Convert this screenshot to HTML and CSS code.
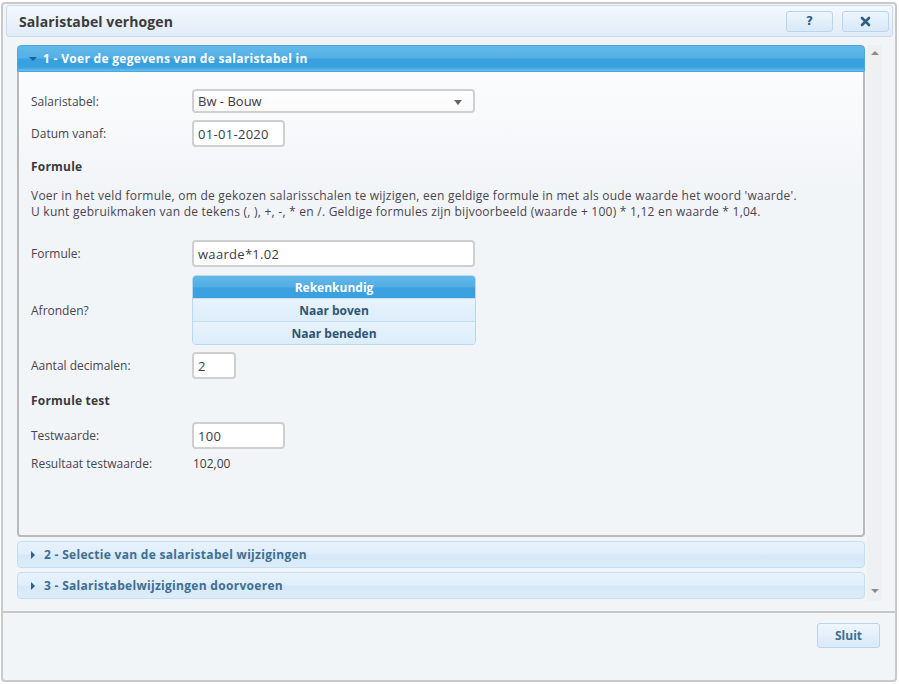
FILE: index.html
```html
<!DOCTYPE html>
<html>
<head>
<meta charset="utf-8">
<link rel="stylesheet" href="styles.css">
</head>
<body>
<div class="dialog">
  <div class="titlebar">
    <div class="title">Salaristabel verhogen</div>
    <div class="tbtns">
      <button class="tbtn">?</button>
      <button class="tbtn"><svg width="11" height="11" viewBox="0 0 11 11"><path d="M2 2 L9 9 M9 2 L2 9" stroke="#2f5f86" stroke-width="2.6" stroke-linecap="round"/></svg></button>
    </div>
  </div>
  <div class="content">
    <div class="panels">
      <div class="panel open">
        <div class="phead active"><span class="tri down"></span>1 - Voer de gegevens van de salaristabel in</div>
        <div class="pbody">
          <div class="row r-select">
            <div class="label">Salaristabel:</div>
            <div class="select">Bw - Bouw<span class="caret"></span></div>
          </div>
          <div class="row r-date">
            <div class="label">Datum vanaf:</div>
            <div class="input w92">01-01-2020</div>
          </div>
          <div class="heading h-formule">Formule</div>
          <p class="help">Voer in het veld formule, om de gekozen salarisschalen te wijzigen, een geldige formule in met als oude waarde het woord 'waarde'.<br>U kunt gebruikmaken van de tekens (, ), +, -, * en /. Geldige formules zijn bijvoorbeeld (waarde + 100) * 1,12 en waarde * 1,04.</p>
          <div class="row r-formule">
            <div class="label">Formule:</div>
            <div class="input w282">waarde*1.02</div>
          </div>
          <div class="row r-afronden">
            <div class="label">Afronden?</div>
            <div class="btngroup">
              <div class="opt sel">Rekenkundig</div>
              <div class="opt">Naar boven</div>
              <div class="opt">Naar beneden</div>
            </div>
          </div>
          <div class="row r-dec">
            <div class="label">Aantal decimalen:</div>
            <div class="input w43">2</div>
          </div>
          <div class="heading h-test">Formule test</div>
          <div class="row r-test">
            <div class="label">Testwaarde:</div>
            <div class="input w92">100</div>
          </div>
          <div class="row r-result">
            <div class="label">Resultaat testwaarde:</div>
            <div class="value">102,00</div>
          </div>
        </div>
      </div>
      <div class="phead closed"><span class="tri right"></span>2 - Selectie van de salaristabel wijzigingen</div>
      <div class="phead closed"><span class="tri right"></span>3 - Salaristabelwijzigingen doorvoeren</div>
    </div>
    <div class="scrollbar">
      <span class="arrow up"></span>
      <span class="arrow dn"></span>
    </div>
  </div>
  <div class="footer">
    <button class="sluit">Sluit</button>
  </div>
</div>
</body>
</html>
```
FILE: styles.css
```css
* { box-sizing: border-box; }
html, body { margin: 0; padding: 0; }
body {
  background: #ffffff;
  font-family: "Open Sans", "DejaVu Sans", sans-serif;
  font-size: 12px;
  color: #4a4450;
}
.dialog {
  margin: 2px 0 0 1px;
  width: 896px;
  height: 680px;
  border: 2px solid #c9c9c9;
  border-radius: 4px;
  background: #f2f5f8;
  display: flex;
  flex-direction: column;
}
.titlebar {
  margin: 1px 2px 0 3px;
  height: 32px;
  border: 1px solid #c5dcf1;
  border-radius: 3px;
  background: linear-gradient(#f3f8fd, #e1ecf7);
  display: flex;
  align-items: center;
  justify-content: space-between;
  padding: 0 3px 0 12px;
}
.title {
  font-weight: 700;
  font-size: 14px;
  color: #3b3b3b;
  letter-spacing: 0.1px;
}
.tbtns { display: flex; gap: 9px; }
.tbtn {
  width: 47px;
  height: 21px;
  border: 1px solid #b8d4ee;
  border-radius: 3px;
  background: linear-gradient(#edf5fc, #d9e9f7);
  color: #2f5f86;
  font-family: "DejaVu Sans", sans-serif;
  font-weight: 700;
  font-size: 12px;
  padding: 0;
  display: flex;
  align-items: center;
  justify-content: center;
}
.content {
  display: flex;
  padding: 8px 13px 0 14px;
  height: 574px;
}
.panels { flex: 1; display: flex; flex-direction: column; }
.panel { display: flex; flex-direction: column; }
.phead {
  height: 27px;
  border-radius: 4px 4px 0 0;
  display: flex;
  align-items: center;
  padding-left: 11px;
  font-weight: 700;
  font-size: 12px;
  letter-spacing: 0.3px;
}
.phead.active {
  background: linear-gradient(#62b8e8 0%, #55b0e5 48%, #39a0e0 52%, #3aa1df 85%, #6fbde9 100%);
  border: 1px solid #4aa8e1;
  color: #ffffff;
}
.phead.closed {
  margin-top: 4px;
  border-radius: 4px;
  background: linear-gradient(#e6f2fc 0%, #e1effb 48%, #d6e9f8 52%, #dcecf9 100%);
  border: 1px solid #c4dff4;
  color: #3e6e93;
  padding-left: 10px;
}
.tri { display: inline-block; width: 0; height: 0; margin-right: 6px; }
.tri.down {
  border-left: 4px solid transparent;
  border-right: 4px solid transparent;
  border-top: 4px solid #1d639a;
}
.tri.right {
  border-top: 4px solid transparent;
  border-bottom: 4px solid transparent;
  border-left: 4px solid #2f5f86;
  margin-left: 3px;
  margin-right: 9px;
}
.pbody {
  height: 465px;
  border: 2px solid #b9b9b9;
  border-top: 0;
  border-radius: 0 0 4px 4px;
  background: linear-gradient(#fbfcfd, #f2f5f8 25%, #f2f5f8);
  padding: 17px 0 0 12px;
}
.row { display: flex; align-items: center; }
.label { width: 161px; color: #4a4450; }
.select, .input {
  border: 2px solid #cfcfcf;
  border-radius: 4px;
  background: #ffffff;
  color: #3e3a44;
  font-size: 13px;
  display: flex;
  align-items: center;
  padding-left: 4px;
}
.input { letter-spacing: 0.3px; }
.select {
  width: 283px;
  height: 24px;
  position: relative;
  background: linear-gradient(#ffffff, #fafafa);
}
.caret {
  position: absolute;
  right: 11px;
  top: 9px;
  border-left: 4px solid transparent;
  border-right: 4px solid transparent;
  border-top: 5px solid #666;
}
.input { height: 27px; }
.w92 { width: 93px; }
.w282 { width: 283px; }
.w43 { width: 44px; }
.r-date { margin-top: 7px; }
.heading { font-weight: 700; color: #3d3840; font-size: 12px; letter-spacing: 0.2px; }
.h-formule { margin-top: 12px; line-height: 16px; }
.help { margin: 13px 0 0 0; line-height: 16px; color: #4a4450; letter-spacing: 0.24px; }
.r-formule { margin-top: 20px; }
.r-afronden { margin-top: 8px; }
.btngroup {
  width: 284px;
  border: 1px solid #b9d7f0;
  border-radius: 4px;
  overflow: hidden;
}
.opt {
  height: 23px;
  display: flex;
  align-items: center;
  justify-content: center;
  font-weight: 700;
  font-size: 12px;
  color: #2f5575;
  background: linear-gradient(#e8f3fc, #dcedfa);
  border-top: 1px solid #c5e0f5;
}
.opt.sel {
  border-top: 0;
  height: 22px;
  color: #ffffff;
  background: linear-gradient(#62b8e8 0%, #52ade4 50%, #3aa0df 55%, #3ba1df 100%);
}
.r-dec { margin-top: 7px; }
.h-test { margin-top: 14px; line-height: 16px; }
.r-test { margin-top: 13px; }
.r-result { margin-top: 6px; }
.value { color: #3e3a44; padding-left: 1px; }
.scrollbar {
  width: 15px;
  margin-left: 2px;
  background: #eef0f2;
  display: flex;
  flex-direction: column;
  justify-content: space-between;
  align-items: center;
  padding: 6px 0 8px;
  height: 556px;
}
.arrow { width: 0; height: 0; border-left: 4px solid transparent; border-right: 4px solid transparent; }
.arrow.up { border-bottom: 4px solid #8c8c8c; }
.arrow.dn { border-top: 4px solid #8c8c8c; }
.footer {
  flex: 1;
  border-top: 2px solid #c8c8c8;
  display: flex;
  justify-content: flex-end;
  align-items: flex-start;
  padding: 10px 15px 0 0;
  margin-top: 0;
}
.sluit {
  width: 63px;
  height: 25px;
  border: 1px solid #b8d4ee;
  border-radius: 3px;
  background: linear-gradient(#eef6fd, #d9e9f7);
  color: #3e6e93;
  font-family: "Open Sans", "DejaVu Sans", sans-serif;
  font-weight: 700;
  font-size: 12px;
  padding: 0;
}
```
